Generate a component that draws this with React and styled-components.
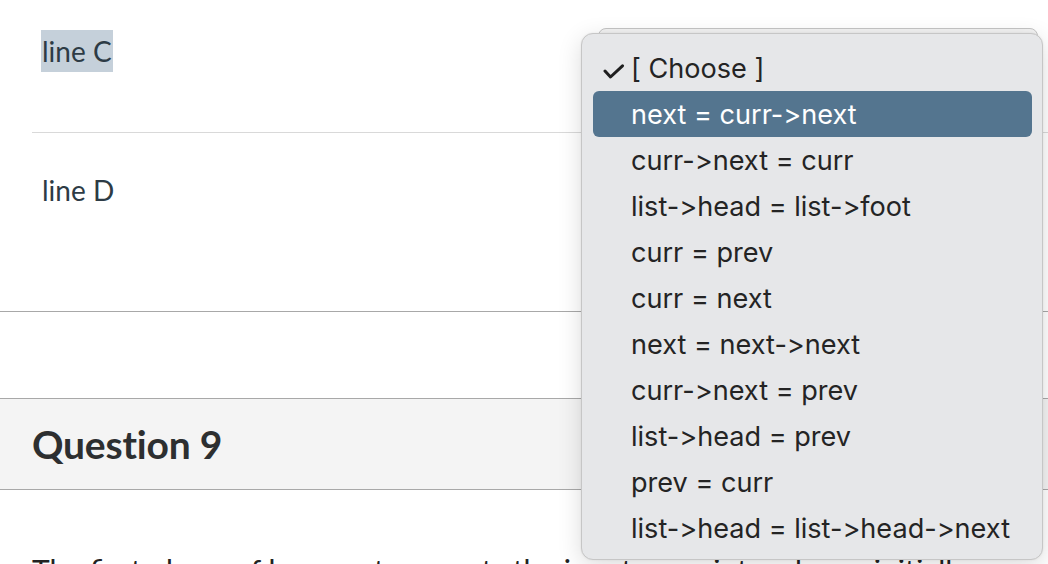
import React from "react";
import styled, { createGlobalStyle } from "styled-components";

const options = [
  "next = curr->next",
  "curr->next = curr",
  "list->head = list->foot",
  "curr = prev",
  "curr = next",
  "next = next->next",
  "curr->next = prev",
  "list->head = prev",
  "prev = curr",
  "list->head = list->head->next",
];

const GlobalStyle = createGlobalStyle`
  html, body {
    margin: 0;
    padding: 0;
    background: #fff;
    overflow: hidden;
  }
  body {
    font-family: Lato, "Open Sans", sans-serif;
    color: #2d3b45;
  }
`;

function Check() {
  return (
    <svg width="22" height="15" viewBox="0 0 22 15">
      <path
        d="M2 7 L7.5 13 L19.5 1.8"
        fill="none"
        stroke="#1f1f1f"
        strokeWidth="3"
        strokeLinecap="round"
        strokeLinejoin="round"
      />
    </svg>
  );
}

function App() {
  const selected = 0;

  return (
    <>
      <GlobalStyle />
      <Page>
        <Answers>
          <AnswerRow>
            <Label highlighted>line C</Label>
          </AnswerRow>
          <AnswerRow tall>
            <Label>line D</Label>
          </AnswerRow>
        </Answers>
        <Spacer />
        <QuestionHeader>
          <h2>Question 9</h2>
        </QuestionHeader>
        <QuestionText>
          The first phase of heapsort converts the input array into a heap, initially
        </QuestionText>

        <SelectBox />
        <Menu>
          <MenuItem>
            <CheckSlot>
              <Check />
            </CheckSlot>
            [ Choose ]
          </MenuItem>
          {options.map((opt, i) => (
            <MenuItem key={opt} active={i === selected}>
              {opt}
            </MenuItem>
          ))}
        </Menu>
      </Page>
    </>
  );
}

export default App;

const Page = styled.div`
  position: relative;
  width: 1048px;
  height: 564px;
  overflow: hidden;
`;

const Answers = styled.div`
  padding-left: 32px;
`;

const AnswerRow = styled.div`
  height: ${(p) => (p.tall ? "178px" : "133px")};
  padding: ${(p) => (p.tall ? "36px 10px 0" : "30px 10px 0")};
  box-sizing: border-box;
  border-bottom: 1px solid ${(p) => (p.tall ? "transparent" : "#d9d9d9")};
  font-size: 28px;
  line-height: 40px;
`;

const Label = styled.span`
  display: inline-block;
  padding: 1px 1px;
  margin-left: -1px;
  background: ${(p) => (p.highlighted ? "#c5d0da" : "transparent")};
`;

const Spacer = styled.div`
  height: 86px;
  border-top: 1px solid #a8a8a8;
`;

const QuestionHeader = styled.div`
  height: 90px;
  background: #f4f4f4;
  border-top: 1px solid #a8a8a8;
  border-bottom: 1px solid #a8a8a8;
  display: flex;
  align-items: center;
  padding-left: 32px;

  h2 {
    margin: 0;
    font-size: 39px;
    font-weight: 700;
    color: #2d2f30;
    letter-spacing: -0.2px;
  }
`;

const QuestionText = styled.p`
  margin: 60px 0 0 32px;
  font-size: 30px;
  line-height: 40px;
  white-space: nowrap;
  color: #222;
`;

const SelectBox = styled.div`
  position: absolute;
  left: 598px;
  top: 28px;
  width: 438px;
  height: 60px;
  border: 1px solid #c4c4c4;
  border-radius: 8px;
  background: #f2f2f2;
`;

const Menu = styled.div`
  position: absolute;
  left: 581px;
  top: 33px;
  width: 462px;
  height: 527px;
  box-sizing: border-box;
  padding: 11px 10px 10px 11px;
  background: #e6e7e9;
  border: 1px solid #c6c6c6;
  border-radius: 12px;
  box-shadow: 0 6px 24px rgba(0, 0, 0, 0.14), 0 0 2px rgba(0, 0, 0, 0.08);
  display: flex;
  flex-direction: column;
  font-family: Inter, "Liberation Sans", sans-serif;
  font-feature-settings: "calt" 0, "liga" 0;
  font-variant-ligatures: none;
`;

const MenuItem = styled.div`
  position: relative;
  height: 46px;
  flex: none;
  display: flex;
  align-items: center;
  padding-left: 38px;
  border-radius: 6px;
  font-size: 27.1px;
  color: ${(p) => (p.active ? "#fff" : "#242424")};
  background: ${(p) => (p.active ? "#54758f" : "transparent")};
`;

const CheckSlot = styled.span`
  position: absolute;
  left: 10px;
  top: 19px;
  display: flex;
`;
